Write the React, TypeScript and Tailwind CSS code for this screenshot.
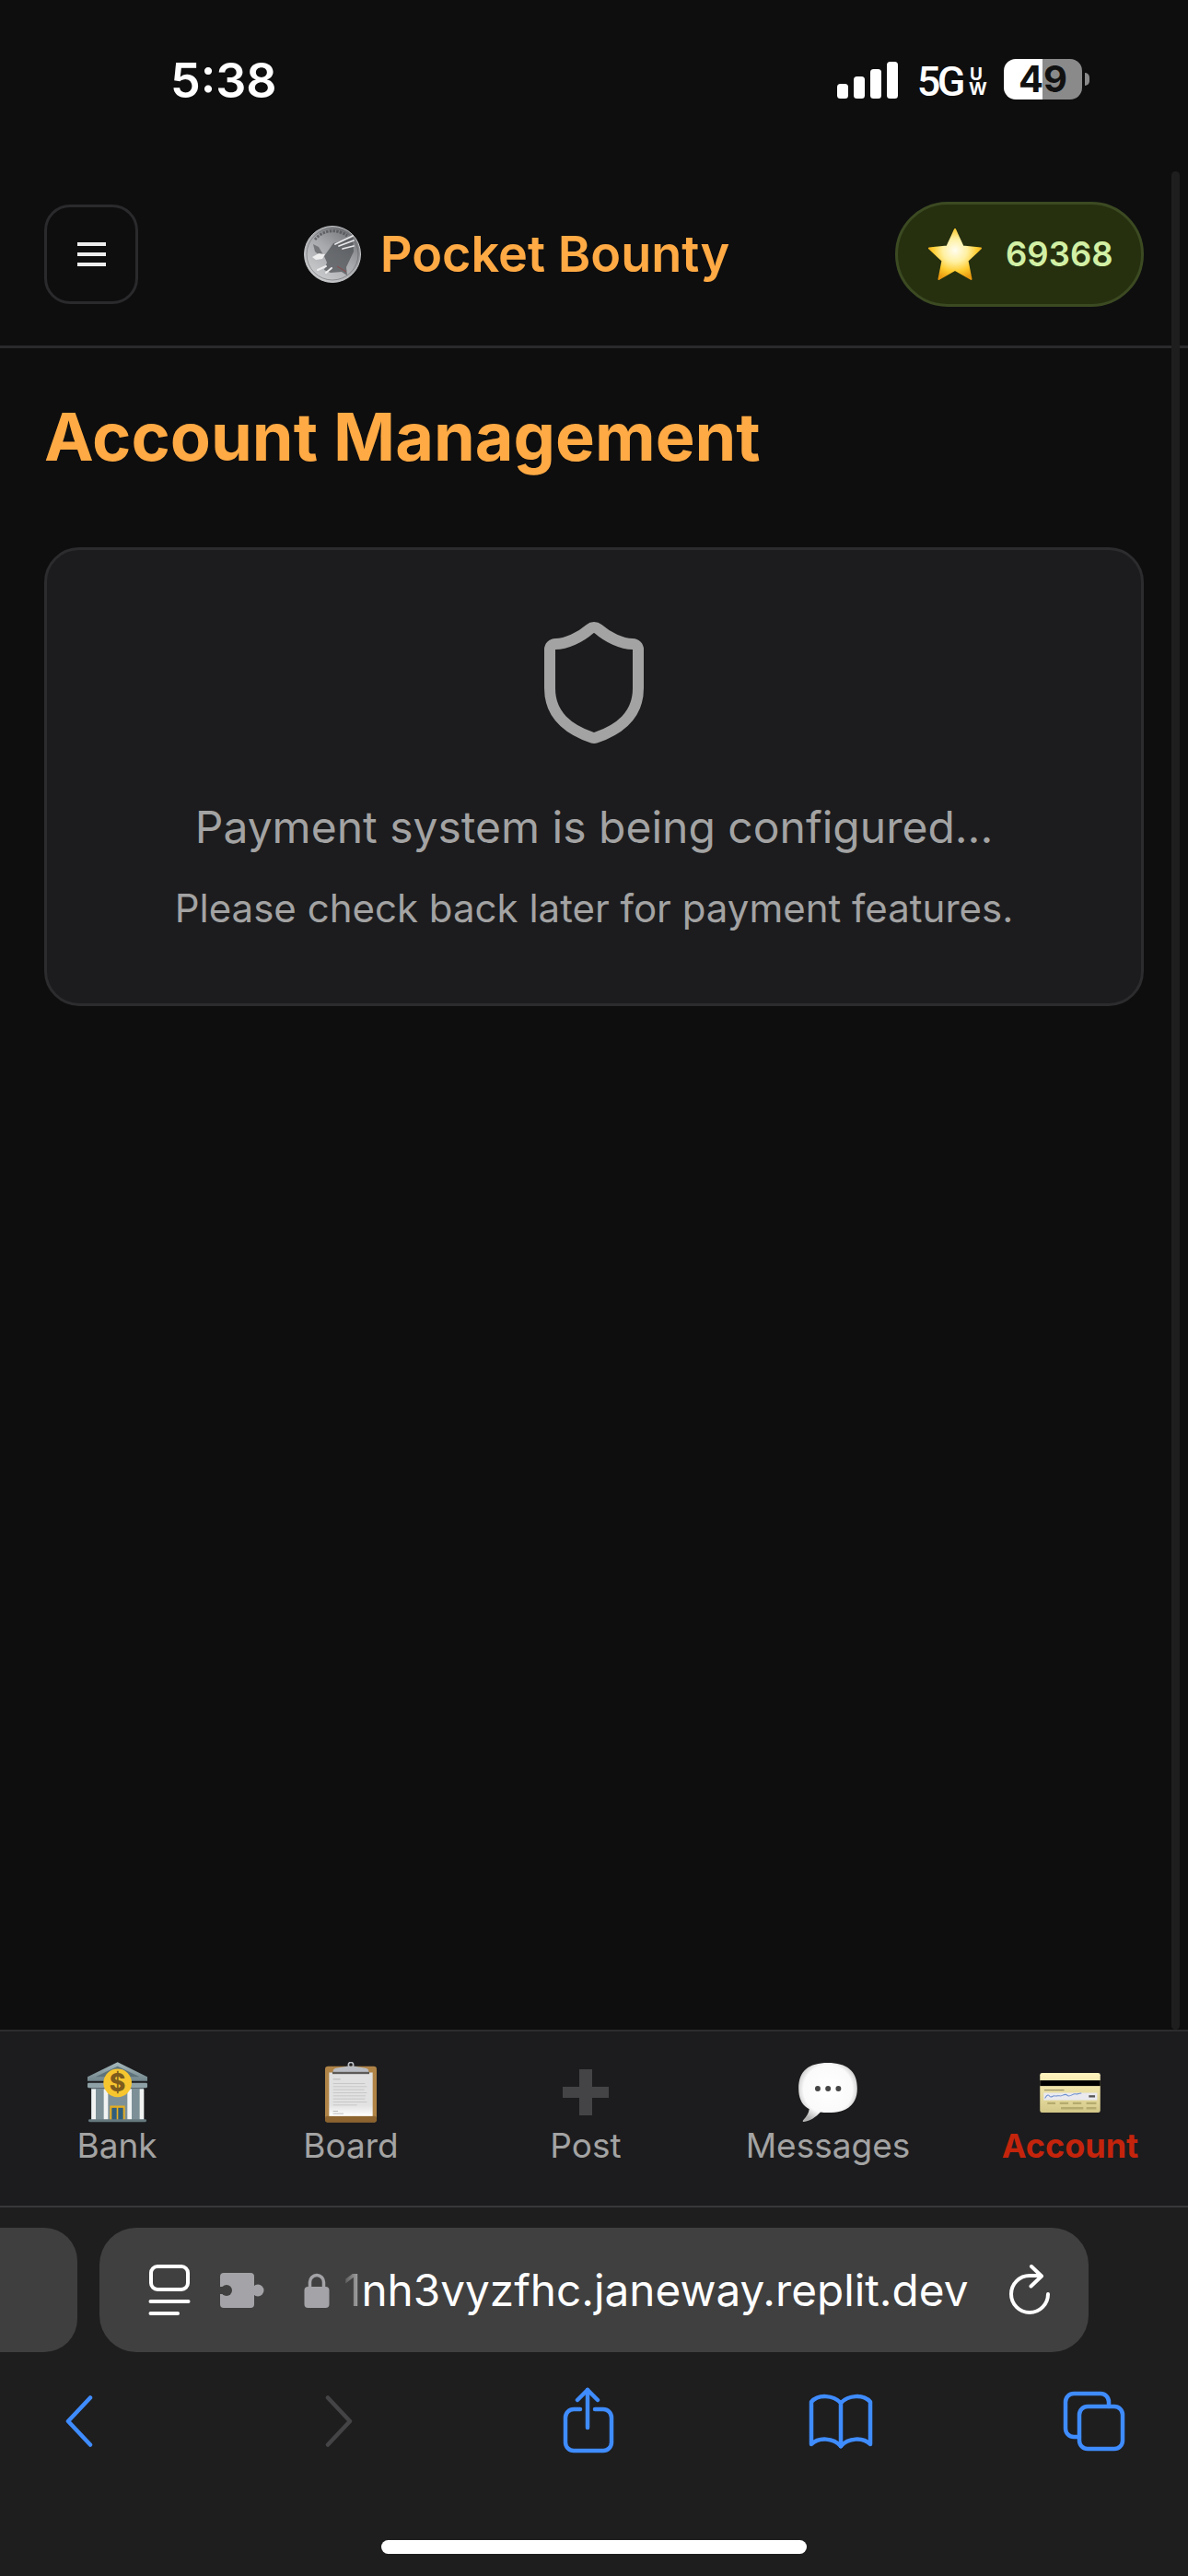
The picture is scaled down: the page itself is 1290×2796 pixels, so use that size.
import { Shield } from "lucide-react";

const inter = "font-['Inter',sans-serif]";

function StatusBar() {
  return (
    <div className="flex h-[174px] items-start justify-between pl-[185px] pr-[107px] pt-[65px] text-white">
      <span className="text-[52px] font-semibold leading-[46px]">5:38</span>
      <div className="-mt-[1px] flex items-start">
        <svg width="66" height="42" viewBox="0 0 66 42" className="mt-[2px]" fill="#fff">
          <rect x="0" y="25" width="12" height="16" rx="3.5" />
          <rect x="18" y="17" width="12" height="24" rx="3.5" />
          <rect x="36" y="9" width="12" height="32" rx="3.5" />
          <rect x="54" y="1" width="12" height="40" rx="3.5" />
        </svg>
        <span className="ml-[21px] mt-[3px] whitespace-nowrap font-['Roboto',sans-serif] text-[45px] font-medium leading-[44px] tracking-[-3.5px]">
          5G
        </span>
        <span className="ml-[7px] mt-[9px] w-[16px] break-all text-center text-[19px] font-bold leading-[16px]">UW</span>
        <div className="ml-[22px] flex h-[44px] w-[85px] items-center justify-center rounded-[13px] bg-[linear-gradient(90deg,#ffffff_49%,#8a8a8a_49%)] text-[40px] font-bold leading-[44px] text-[#111]">
          49
        </div>
        <div className="ml-[3px] mt-[15px] h-[14px] w-[5px] rounded-r-full bg-[#8a8a8a]" />
      </div>
    </div>
  );
}

function Coin() {
  return (
    <svg width="62" height="62" viewBox="0 0 62 62">
      <defs>
        <linearGradient id="coin" x1="0.1" y1="0.95" x2="0.8" y2="0">
          <stop offset="0" stopColor="#cfd1d3" />
          <stop offset="0.55" stopColor="#a6a8ab" />
          <stop offset="1" stopColor="#6d6f73" />
        </linearGradient>
      </defs>
      <circle cx="31" cy="31" r="30.5" fill="url(#coin)" stroke="#c2c4c6" strokeWidth="1" />
      <circle cx="31" cy="31" r="28" fill="none" stroke="#55575a" strokeWidth="1" opacity="0.5" />
      <circle cx="31" cy="31" r="24.5" fill="none" stroke="#4a4c50" strokeWidth="3" strokeDasharray="2 1.500 3 1.500" pathLength="120" opacity="0" />
      <path d="M12 15A25 25 0 0 1 47 11" fill="none" stroke="#4a4c50" strokeWidth="3" strokeDasharray="2.500 1.200" opacity="0.7" />
      {/* eagle */}
      <path d="M22 33l10-14 21-6 1 15-8 17 1 9-6-4-12 1-7-3 3-8z" fill="#4e5054" opacity="0.72" />
      <path d="M10 20l6 3 6 10-3 1-7-6z" fill="#75777b" />
      <path d="M9 34l7-4 7 1-3 5-7 1z" fill="#eeeeef" />
      <path d="M34 20l19-9M38 22l16-6M42 25l12-3" stroke="#e8e8ea" strokeWidth="1.800" strokeLinecap="round" />
      <path d="M24 44l-9 4M30 46l-6 5" stroke="#eeeeef" strokeWidth="2" strokeLinecap="round" />
      <path d="M36 44l10 6" stroke="#8a4a4a" strokeWidth="1" />
    </svg>
  );
}

function StarIcon() {
  return (
    <svg width="60" height="58" viewBox="0 0 60 58">
      <defs>
        <radialGradient id="star" cx="0.5" cy="0.42" r="0.6">
          <stop offset="0" stopColor="#fffdf0" />
          <stop offset="0.4" stopColor="#fff0a0" />
          <stop offset="0.72" stopColor="#ffcb2e" />
          <stop offset="1" stopColor="#e9980f" />
        </radialGradient>
      </defs>
      <path
        d="M30 2l8.5 18.5 19.5 2-14.5 13.5 4 20L30 46 12.500 56l4-20L2 22.500l19.500-2z"
        fill="url(#star)"
        stroke="url(#star)"
        strokeWidth="2"
        strokeLinejoin="round"
      />
    </svg>
  );
}

function Header() {
  return (
    <header className="flex h-[204px] items-center justify-between border-b-[3px] border-[#2a2a2c] px-[48px] pt-[3px]">
      <button className="flex h-[108px] w-[102px] flex-col items-center justify-center gap-[7px] rounded-[28px] border-[3px] border-[#2a2a2c]">
        <span className="h-[4px] w-[31px] bg-[#eeeeee]" />
        <span className="h-[4px] w-[31px] bg-[#eeeeee]" />
        <span className="h-[4px] w-[31px] bg-[#eeeeee]" />
      </button>
      <div className="flex items-center gap-[21px]">
        <Coin />
        <span className="text-[54px] font-semibold leading-[64px] text-[#ffaa44]">Pocket Bounty</span>
      </div>
      <div className="flex h-[114px] w-[270px] items-center rounded-full border-[3px] border-[#3c4a22] bg-[#26300f] pl-[32px]">
        <StarIcon />
        <span className="ml-[25px] text-[36.5px] font-semibold leading-[44px] text-[#d2f0a5]">69368</span>
      </div>
    </header>
  );
}

function BankIcon() {
  return (
    <svg width="65" height="66" viewBox="0 0 195 197">
      <defs>
        <linearGradient id="roof" x1="0" y1="0" x2="0" y2="1">
          <stop offset="0" stopColor="#a7b9bd" />
          <stop offset="1" stopColor="#71868c" />
        </linearGradient>
      </defs>
      <rect x="12" y="85" width="171" height="105" fill="#7d9097" />
      <path d="M98 0L195 48V62H0V48z" fill="url(#roof)" />
      <path d="M98 14L170 48H26z" fill="#5f747a" />
      <rect x="0" y="68" width="195" height="16" rx="4" fill="#8ea1a6" />
      <rect x="13" y="88" width="14" height="100" fill="#f1f3f3" />
      <rect x="53" y="88" width="14" height="100" fill="#f1f3f3" />
      <rect x="130" y="88" width="14" height="100" fill="#f1f3f3" />
      <rect x="170" y="88" width="14" height="100" fill="#f1f3f3" />
      <rect x="73" y="142" width="49" height="50" fill="#e4ad22" />
      <rect x="79" y="149" width="16" height="43" fill="#2f5d7c" />
      <rect x="100" y="149" width="16" height="43" fill="#2f5d7c" />
      <rect x="3" y="186" width="189" height="9" rx="4" fill="#66797f" />
      <circle cx="98" cy="68" r="46" fill="#f7c62f" />
      <text x="98" y="96" textAnchor="middle" fontFamily="Inter, sans-serif" fontSize="80" fontWeight="800" fill="#7d5c1d">
        $
      </text>
    </svg>
  );
}

function BoardIcon() {
  return (
    <svg width="56" height="66" viewBox="0 0 168 197">
      <defs>
        <linearGradient id="paper" x1="0" y1="0" x2="0" y2="1">
          <stop offset="0" stopColor="#e0e0e0" />
          <stop offset="0.75" stopColor="#e2e2e2" />
          <stop offset="1" stopColor="#ffffff" />
        </linearGradient>
      </defs>
      <rect x="0" y="14" width="168" height="182" rx="10" fill="#b08447" />
      <rect x="0" y="176" width="168" height="20" rx="8" fill="#8d642f" />
      <rect x="13" y="34" width="142" height="142" fill="url(#paper)" />
      <circle cx="84" cy="9" r="8" fill="none" stroke="#b9bcc2" strokeWidth="5" />
      <path d="M26 30q0-8 10-10l36-6h24l36 6q10 2 10 10v7H26z" fill="#b9bcc2" />
      <rect x="24" y="32" width="120" height="7" fill="#5d5a57" />
      <g stroke="#a0a0a0" strokeWidth="2">
        <path d="M26 56H50" />
        <path d="M26 70H130M26 80H136M26 90H128M26 100H136M26 110H132M26 120H130M26 130H136M26 140H104" opacity="0.6" />
        <path d="M26 160H42M26 168H60" />
      </g>
    </svg>
  );
}

function BubbleIcon() {
  return (
    <svg width="64" height="64" viewBox="0 0 193 194">
      <defs>
        <radialGradient id="bubble" cx="0.5" cy="0.45" r="0.58">
          <stop offset="0" stopColor="#ffffff" />
          <stop offset="0.72" stopColor="#fafafa" />
          <stop offset="1" stopColor="#b4b4b4" />
        </radialGradient>
      </defs>
      <path
        d="M96 0c62 0 97 26 97 84 0 56-36 80-97 80-9 0-17-1-24-2-14 15-34 30-55 32-4 0-4-3-2-5 10-11 19-24 20-37C10 139 0 116 0 84 0 26 34 0 96 0z"
        fill="url(#bubble)"
      />
      <circle cx="63" cy="85" r="9" fill="#454545" />
      <circle cx="97" cy="85" r="9" fill="#454545" />
      <circle cx="131" cy="85" r="9" fill="#454545" />
    </svg>
  );
}

function CardIcon() {
  return (
    <svg width="66" height="43" viewBox="0 0 195 128">
      <defs>
        <linearGradient id="gold" x1="0" y1="0" x2="0" y2="1">
          <stop offset="0" stopColor="#fff4bd" />
          <stop offset="1" stopColor="#d3c788" />
        </linearGradient>
      </defs>
      <rect width="195" height="128" rx="7" fill="url(#gold)" />
      <rect y="24" width="195" height="18" fill="#000" />
      <rect x="12" y="64" width="173" height="24" fill="#e9e9ee" />
      <path d="M16 82c8-14 12-12 16-6s10-4 16-2 12-2 18 0 14-10 22-2 18-6 26-4 14-4 20-2" fill="none" stroke="#6d8fd0" strokeWidth="3" />
      <rect x="158" y="72" width="20" height="7" fill="#555" />
      <rect x="14" y="54" width="64" height="3" fill="#8d8660" />
      <path d="M24 98H50M64 98H92M106 98H134M150 98H182M68 114H140M150 114H182" stroke="#b5ab6e" strokeWidth="7" />
    </svg>
  );
}

function PlusIcon() {
  return (
    <svg width="50" height="50" viewBox="0 0 50 50" fill="#444446">
      <rect x="18" y="0" width="14" height="50" />
      <rect x="0" y="19" width="50" height="12" />
    </svg>
  );
}

const navItems = [
  { label: "Bank", icon: <BankIcon /> },
  { label: "Board", icon: <BoardIcon /> },
  { label: "Post", icon: <PlusIcon /> },
  { label: "Messages", icon: <BubbleIcon /> },
  { label: "Account", icon: <CardIcon />, active: true },
];

function BottomNav() {
  return (
    <nav className="grid h-[193px] grid-cols-[254px_254px_256px_270px_256px] border-y-[2px] border-b-[#38383a] border-t-[#2c2c2e] bg-[#1c1c1e] pt-[33px]">
      {navItems.map((item) => (
        <div key={item.label} className="flex flex-col items-center">
          <div className="flex h-[66px] items-center justify-center">{item.icon}</div>
          <span
            className={
              item.active
                ? "mt-[3px] text-[36px] font-bold leading-[44px] text-[#c4240c]"
                : "mt-[3px] text-[37px] leading-[44px] text-[#a3a3a3]"
            }
          >
            {item.label}
          </span>
        </div>
      ))}
    </nav>
  );
}

function UrlBar() {
  return (
    <div className="flex h-[135px] gap-[24px]">
      <div className="w-[84px] rounded-r-[36px] bg-[#3f3f3f]" />
      <div className="flex w-[1074px] items-center rounded-[40px] bg-[#404040] pl-[53px] text-white">
        <svg width="46" height="56" viewBox="0 0 46 56" fill="none" stroke="#fff" strokeWidth="4" strokeLinecap="round">
          <rect x="3" y="2" width="40" height="25" rx="7" />
          <path d="M2.500 40H43.500" />
          <path d="M2.500 53H32" />
        </svg>
        <svg width="48" height="38" viewBox="0 0 48 38" className="ml-[32px]" fill="#a4a4a8">
          <rect x="0" y="0" width="37" height="38" rx="4" />
          <circle cx="41" cy="19" r="6.500" />
          <circle cx="7" cy="19" r="6" fill="#404040" />
          <rect x="0" y="15" width="5" height="8" fill="#404040" />
        </svg>
        <svg width="28" height="38" viewBox="0 0 28 38" className="ml-[43px]">
          <path d="M6.500 17V10a7.500 7.500 0 0 1 15 0v7" fill="none" stroke="#a4a4a8" strokeWidth="3.500" />
          <rect x="0.500" y="15" width="27" height="23" rx="4" fill="#a4a4a8" />
        </svg>
        <span className="ml-[15px] w-[677px] whitespace-nowrap text-[47.7px] leading-[60px]">
          <span className="bg-[linear-gradient(90deg,#555555,#b0b0b0)] bg-clip-text text-transparent">1</span>
          nh3vyzfhc.janeway.replit.dev
        </span>
        <svg width="48" height="56" viewBox="0 0 48 56" className="ml-[45px]" fill="none" stroke="#fff" strokeWidth="4" strokeLinecap="round" strokeLinejoin="round">
          <path d="M43 32A20 20 0 1 1 23 12H34" />
          <path d="M25 2L36 12.500L24.500 23.500" />
        </svg>
      </div>
    </div>
  );
}

function SafariToolbar() {
  return (
    <div className="flex h-[80px] items-center">
      <svg width="30" height="56" viewBox="0 0 30 56" className="ml-[71px]" fill="none" stroke="#3f8cff" strokeWidth="4.500" strokeLinecap="round" strokeLinejoin="round">
        <path d="M27 2.500L3 28L27 53.500" />
      </svg>
      <svg width="30" height="56" viewBox="0 0 30 56" className="ml-[252px]" fill="none" stroke="#444446" strokeWidth="4.500" strokeLinecap="round" strokeLinejoin="round">
        <path d="M3 2.500L27 28L3 53.500" />
      </svg>
      <svg width="60" height="74" viewBox="0 0 60 74" className="ml-[226px]" fill="none" stroke="#3f8cff" strokeWidth="4.500" strokeLinecap="round" strokeLinejoin="round">
        <path d="M21 24H14a9 9 0 0 0-9 9V60a9 9 0 0 0 9 9H46a9 9 0 0 0 9-9V33a9 9 0 0 0-9-9H37" />
        <path d="M29 3V44" />
        <path d="M18 14L29 3L40 14" />
      </svg>
      <svg width="70" height="60" viewBox="0 0 70 60" className="ml-[209px]" fill="none" stroke="#3f8cff" strokeWidth="4.500" strokeLinecap="round" strokeLinejoin="round">
        <path d="M35 10V57" />
        <path d="M35 10C27 2 11 0 3 9V55C11 47 27 48 35 57" />
        <path d="M35 10C43 2 59 0 67 9V55C59 47 43 48 35 57" />
      </svg>
      <svg width="68" height="68" viewBox="0 0 68 68" className="ml-[206px]" fill="none" stroke="#3f8cff" strokeWidth="4.500" strokeLinecap="round" strokeLinejoin="round">
        <path d="M18 51H12a9 9 0 0 1-9-9V13a9 9 0 0 1 9-9H41a9 9 0 0 1 9 9V18" />
        <rect x="18" y="18" width="47" height="46" rx="9" />
      </svg>
    </div>
  );
}

export default function App() {
  return (
    <div className={`${inter} relative flex h-[2796px] w-[1290px] flex-col overflow-hidden bg-[#0e0e0f]`}>
      <StatusBar />
      <Header />
      <main className="flex-1 px-[48px]">
        <h1 className="mt-[52px] text-[72px] font-bold leading-[88px] text-[#ffaa44]">Account Management</h1>
        <section className="mt-[76px] flex h-[498px] flex-col items-center rounded-[38px] border-[3px] border-[#2c2c2e] bg-[#1c1c1e] pt-[72px]">
          <Shield size={144} strokeWidth={2} className="text-[#a3a3a3]" />
          <p className="mt-[51px] text-[48px] leading-[68px] text-[#a3a3a3]">Payment system is being configured...</p>
          <p className="mt-[26px] text-[42px] leading-[56px] text-[#a3a3a3]">Please check back later for payment features.</p>
        </section>
      </main>
      <BottomNav />
      <div className="flex h-[400px] flex-col bg-[#1e1e1e] pt-[22px]">
        <UrlBar />
        <div className="mt-[35px]">
          <SafariToolbar />
        </div>
        <div className="mb-[24px] mt-auto flex justify-center">
          <div className="h-[15px] w-[462px] rounded-full bg-white" />
        </div>
      </div>
      {/* overlay scrollbar */}
      <div className="absolute right-[9px] top-[186px] h-[2017px] w-[9px] rounded-full bg-[#1e1e1f]" />
    </div>
  );
}
